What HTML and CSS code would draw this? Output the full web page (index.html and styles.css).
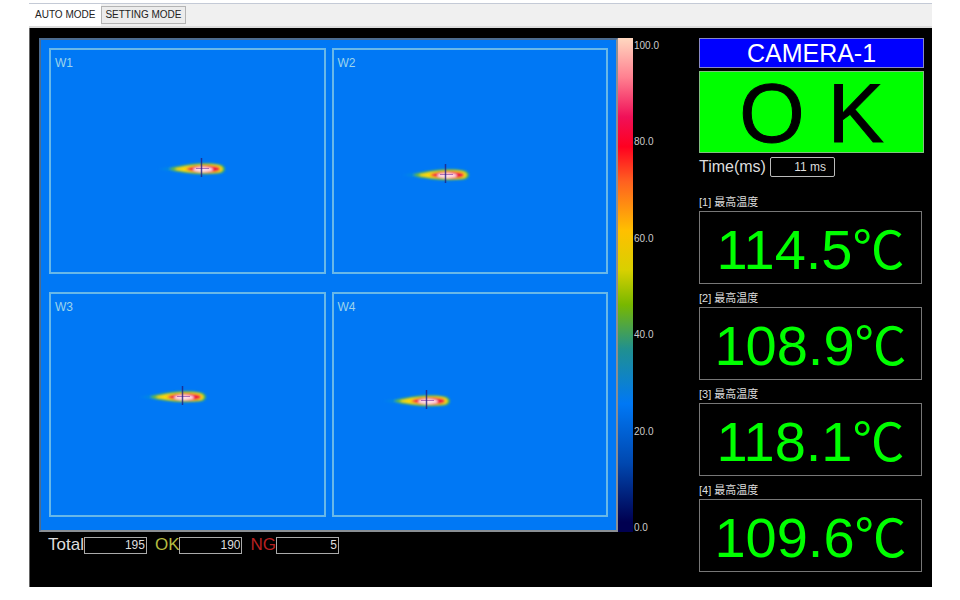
FILE: index.html
```
<!DOCTYPE html>
<html lang="ja">
<head>
  <meta charset="UTF-8">
  <meta name="viewport" content="width=device-width, initial-scale=1.0">
  <title>CAMERA-1</title>
  <link rel="stylesheet" href="styles.css">
</head>
<body>
  <!-- ホットスポットの共通図形 -->
  <svg class="defs" width="0" height="0" aria-hidden="true">
    <defs>
      <filter id="soft" x="-20%" y="-60%" width="140%" height="220%">
        <feGaussianBlur stdDeviation="0.9"/>
      </filter>
      <linearGradient id="tail">
        <stop offset="0" stop-color="#00a0e0" stop-opacity="0"/>
        <stop offset="0.5" stop-color="#10a0c0" stop-opacity="0.5"/>
        <stop offset="1" stop-color="#50b040"/>
      </linearGradient>
      <symbol id="spot" viewBox="0 0 80 24">
        <g filter="url(#soft)">
          <path d="M0 12 L24 9 L30 12 L24 15 Z" fill="url(#tail)"/>
          <path d="M14 12 C28 6 58 5 67 8 Q73 12 67 16 C58 18 28 18 14 12 Z" fill="#5cb848"/>
          <path d="M19 12 C32 8 57 6 65 9 Q70 12 65 15 C57 17 32 16 19 12 Z" fill="#ffd800"/>
          <path d="M31 12 C38 8 57 8 63 10 Q67 12 63 14 C57 16 38 16 31 12 Z" fill="#f01840"/>
          <ellipse cx="48" cy="12.500" rx="10" ry="2.500" fill="#ffe0ec"/>
        </g>
        <path d="M41 11.500 H54" stroke="#8030a0" stroke-width="1" opacity="0.6"/>
        <path d="M46.500 1 V20" stroke="#202080" stroke-width="1.500" opacity="0.8"/>
      </symbol>
    </defs>
  </svg>

  <div class="app">
    <nav class="tabs">
      <button class="tab active" type="button">AUTO MODE</button>
      <button class="tab" type="button">SETTING MODE</button>
    </nav>

    <main class="monitor">
      <section class="view">
        <div class="thermal-row">
          <div class="thermal">
            <div class="window">W1<svg class="spot spot-1"><use href="#spot"/></svg></div>
            <div class="window">W2<svg class="spot spot-2"><use href="#spot"/></svg></div>
            <div class="window">W3<svg class="spot spot-3"><use href="#spot"/></svg></div>
            <div class="window">W4<svg class="spot spot-4"><use href="#spot"/></svg></div>
          </div>
          <div class="color-bar"></div>
          <div class="scale">
            <span>100.0</span>
            <span>80.0</span>
            <span>60.0</span>
            <span>40.0</span>
            <span>20.0</span>
            <span>0.0</span>
          </div>
        </div>
        <div class="counts">
          <label for="total">Total</label>
          <input id="total" type="text" value="195" readonly>
          <label class="count-ok" for="ok">OK</label>
          <input id="ok" type="text" value="190" readonly>
          <label class="count-ng" for="ng">NG</label>
          <input id="ng" type="text" value="5" readonly>
        </div>
      </section>

      <aside class="panel">
        <h1 class="camera">CAMERA-1</h1>
        <div class="judge">O K</div>
        <div class="time">
          <label for="time">Time(ms)</label>
          <input id="time" type="text" value="11 ms" readonly>
        </div>
        <div class="readings">
          <div class="reading">
            <label for="temp-1">[1] 最高温度</label>
            <output id="temp-1">114.5<span class="unit">℃</span></output>
          </div>
          <div class="reading">
            <label for="temp-2">[2] 最高温度</label>
            <output id="temp-2">108.9<span class="unit">℃</span></output>
          </div>
          <div class="reading">
            <label for="temp-3">[3] 最高温度</label>
            <output id="temp-3">118.1<span class="unit">℃</span></output>
          </div>
          <div class="reading">
            <label for="temp-4">[4] 最高温度</label>
            <output id="temp-4">109.6<span class="unit">℃</span></output>
          </div>
        </div>
      </aside>
    </main>
  </div>
</body>
</html>
```
FILE: styles.css
```
* {
  box-sizing: border-box;
}
body {
  margin: 0;
  padding: 3px 28px 12px 29px;
  background: #fff;
  font-family: "Liberation Sans", "Noto Sans CJK JP", sans-serif;
}
.defs {
  position: absolute;
}
/* タブ */
.tabs {
  display: flex;
  align-items: flex-start;
  height: 25px;
  background: #f0f0f0;
  border-top: 1px solid #c4cad6;
  border-bottom: 2px solid #dcdcdc;
}
.tab {
  height: 18px;
  margin-top: 2px;
  padding: 0 3px;
  border: 1px solid #b4b4b4;
  background: #ececec;
  color: #222;
  font-family: inherit;
  font-size: 10px;
  line-height: 16px;
}
.tab.active {
  height: 22px;
  margin-top: 0;
  padding: 0 6px;
  border: none;
  background: #fff;
  line-height: 20px;
}
.monitor {
  display: flex;
  gap: 32px;
  padding: 10px 8px 15px 9px;
  border-left: 1px solid #666;
  background: #000;
  color: #ddd;
}
.view {
  flex: 1;
}
.thermal-row {
  display: flex;
  height: 494px;
}
.thermal {
  flex: 1;
  display: grid;
  grid-template-columns: 1fr 1fr;
  grid-template-rows: 1fr 1fr;
  gap: 18px 6px;
  padding: 8px 8px 13px;
  border: 2px solid #8a8f94;
  border-top-color: #4c6c90;
  border-left-color: #4c6c90;
  background: #0078f5;
}
.window {
  position: relative;
  padding: 4px;
  border: 2px solid #68b8e8;
  color: #9cd4ec;
  font-size: 12px;
  line-height: 18px;
}
.spot {
  position: absolute;
  width: 80px;
  height: 24px;
  transform: translate(-46px, -13px);
}
.spot-1 { left: 55%; top: 54%; }
.spot-2 { left: 41%; top: 57%; }
.spot-3 { left: 48%; top: 47%; }
.spot-4 { left: 34%; top: 49%; }
/* カラーバー */
.color-bar {
  width: 15px;
  background: linear-gradient(#ffd8c0 0%, #ff8090 8%, #f01058 16%, #ff0020 22%, #ff6020 29%, #ffc000 39%, #d8d000 47%, #78b800 54%, #209090 63%, #0078f5 74%, #0048b0 86%, #000050 98%);
}
.scale {
  display: flex;
  flex-direction: column;
  justify-content: space-between;
  width: 34px;
  margin: 2px 0 -2px;
  padding-left: 1px;
  color: #ccc;
  font-size: 10px;
  line-height: 12px;
}
.counts {
  display: flex;
  align-items: center;
  height: 18px;
  margin-top: 4px;
  padding-left: 9px;
  font-size: 17px;
}
.counts input {
  width: 63px;
  height: 17px;
  margin-right: 8px;
  padding: 0 1px;
  border: 1px solid #aaa;
  background: #000;
  color: #ddd;
  font-family: inherit;
  font-size: 12px;
  text-align: right;
}
.count-ok {
  color: #b4bc40;
}
.count-ng {
  color: #b82020;
}
/* 右側パネル */
.panel {
  width: 225px;
}
.camera {
  height: 30px;
  margin: 0 0 3px;
  border: 1px solid #8888c8;
  background: #0000ff;
  color: #fff;
  font-size: 25px;
  font-weight: normal;
  line-height: 28px;
  text-align: center;
}
.judge {
  height: 82px;
  border: 1px solid #80c080;
  background: #00ff00;
  color: #000;
  font-size: 84px;
  line-height: 82px;
  text-align: center;
  -webkit-text-stroke: 1px #000;
}
.time {
  display: flex;
  align-items: center;
  gap: 4px;
  height: 20px;
  margin-top: 4px;
  font-size: 16px;
}
.time input {
  width: 65px;
  height: 20px;
  padding: 0 8px;
  border: 1px solid #bbb;
  border-radius: 2px;
  background: #000;
  color: #ddd;
  font-family: inherit;
  font-size: 12px;
  text-align: right;
}
.readings {
  display: flex;
  flex-direction: column;
  gap: 8px;
  margin-top: 19px;
}
.reading label {
  display: block;
  height: 15px;
  font-size: 11px;
  line-height: 13px;
}
.reading output {
  display: block;
  width: 223px;
  height: 73px;
  border: 1px solid #777;
  color: #00ff00;
  font-size: 56px;
  line-height: 75px;
  text-align: center;
}
.unit {
  font-family: "Noto Sans CJK JP", sans-serif;
  font-size: 52px;
  line-height: 52px;
}
```
